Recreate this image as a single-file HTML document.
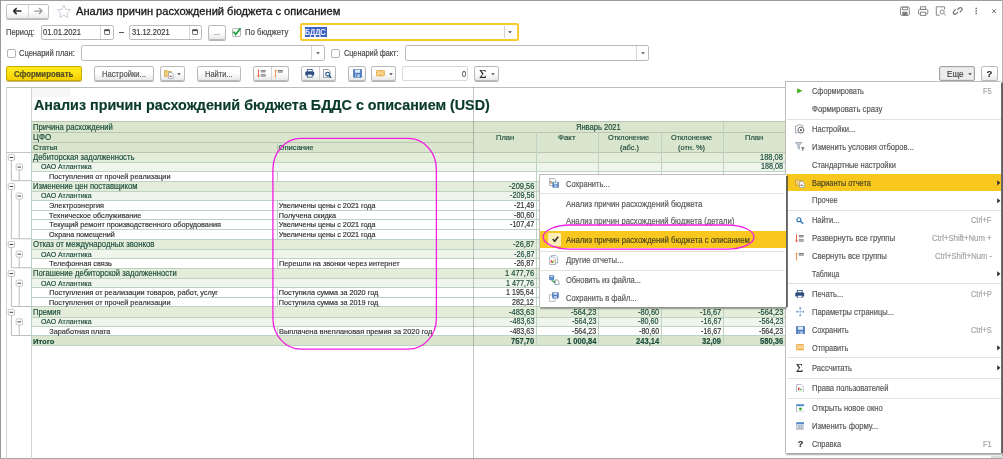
<!DOCTYPE html>
<html lang="ru"><head><meta charset="utf-8"><title>Анализ причин расхождений бюджета с описанием</title>
<style>
html,body{margin:0;padding:0;background:#fff;}
body{width:1003px;height:459px;position:relative;overflow:hidden;font-family:"Liberation Sans",sans-serif;}
#r{position:absolute;left:0;top:0;width:1003px;height:459px;overflow:hidden;background:#fff;filter:blur(0.4px);}
#r div,#r span,#r svg{position:absolute;box-sizing:border-box;}
#r span{white-space:pre;line-height:20px;transform-origin:0 0;-webkit-text-stroke:0.18px;}
</style></head><body><div id="r">
<div style="left:0.00px;top:0.00px;width:1003.00px;height:1.00px;background:#9c9c9c;"></div>
<div style="left:0.00px;top:0.00px;width:1.10px;height:459.00px;background:#9a9a9a;"></div>
<div style="left:0.00px;top:458.00px;width:1003.00px;height:1.00px;background:#a6a6a6;"></div>
<div style="left:1002.00px;top:0.00px;width:1.00px;height:459.00px;background:#b4b4b4;"></div>
<div style="left:6.00px;top:4.40px;width:43.40px;height:14.20px;border:1px solid #c2c2c2;border-radius:2.2px;background:linear-gradient(#fff 45%,#ececec);box-shadow:0 0.9px 0.5px #b8b8b8;"></div>
<div style="left:27.80px;top:5.40px;width:0.80px;height:12.20px;background:#d8d8d8;"></div>
<svg style="left:6.00px;top:4.40px" width="44" height="14" viewBox="0 0 44 14"><path d="M7.4 7.1h8M7.4 7.1l3.3-3M7.4 7.1l3.3 3" stroke="#2a2a2a" stroke-width="1.5" fill="none"/><path d="M28.2 7.1h8M36.2 7.1l-3.3-3M36.2 7.1l-3.3 3" stroke="#9a9a9a" stroke-width="1.3" fill="none"/></svg>
<svg style="left:55.60px;top:4.20px" width="15.6" height="14.6" viewBox="0 0 15 14"><path d="M7.5 1l1.9 4.1 4.4.5-3.3 3 .9 4.4-3.9-2.2-3.9 2.2.9-4.4-3.3-3 4.4-.5z" fill="#fff" stroke="#c2c9d0" stroke-width="0.9"/></svg>
<span style="left:76.00px;top:1px;font-size:11.1px;color:#161616;-webkit-text-stroke:0.3px;">Анализ причин расхождений бюджета с описанием</span>
<svg style="left:899.00px;top:6.00px" width="100" height="11" viewBox="0 0 100 11"><g fill="none" stroke="#7c7c7c" stroke-width="0.9"><rect x="1.5" y="1.1" width="8.8" height="8.2" rx="1"/><rect x="3.4" y="1.1" width="4.9" height="2.6"/><rect x="3.8" y="6.2" width="4.2" height="3.1" fill="#7c7c7c"/><rect x="19.5" y="3.4" width="9.3" height="4.8" rx="1.2"/><rect x="21.6" y="0.8" width="5.1" height="2.6"/><rect x="21.6" y="6.2" width="5.1" height="3.2" fill="#fff"/><path d="M45.5 3.6v-2.8h-8.2v8.4h3.6"/><circle cx="43.2" cy="6" r="2"/><path d="M44.7 7.5l1.9 1.9"/><path d="M59 5.9l-1.9 1.9a1.7 1.7 0 0 1-2.4-2.4l1.9-1.9M58.4 3.9l1.9-1.9a1.7 1.7 0 0 1 2.4 2.4l-1.9 1.9" stroke-width="1.15" stroke="#6e6e6e"/></g><g fill="#666"><rect x="76.5" y="1.7" width="1.4" height="1.5"/><rect x="76.5" y="4.2" width="1.4" height="1.5"/><rect x="76.5" y="6.7" width="1.4" height="1.5"/></g><path d="M93.2 3.3l3.7 3.7M96.9 3.3l-3.7 3.7" stroke="#5a5a5a" stroke-width="0.9" fill="none"/></svg>
<span style="left:6.00px;top:23px;font-size:8.2px;color:#484848;transform:scaleX(0.9151);">Период:</span>
<div style="left:41.00px;top:25.00px;width:72.50px;height:15.00px;border:1px solid #bababa;border-radius:2.2px;background:#fff;"></div>
<div style="left:100.30px;top:25.90px;width:0.80px;height:12.80px;background:#d6d6d6;"></div>
<span style="left:43.20px;top:23px;font-size:8.2px;color:#3c3c3c;transform:scaleX(0.9261);">01.01.2021</span>
<svg style="left:104.10px;top:29.20px" width="6" height="6" viewBox="0 0 6 6"><rect x="0.5" y="0.6" width="5" height="4.8" rx="0.7" fill="#fff" stroke="#4a4a4a" stroke-width="0.8"/><rect x="0.5" y="0.6" width="5" height="1.5" fill="#4a4a4a"/></svg>
<div style="left:119.20px;top:32.00px;width:4.60px;height:1.00px;background:#555;"></div>
<div style="left:129.40px;top:25.00px;width:72.30px;height:15.00px;border:1px solid #bababa;border-radius:2.2px;background:#fff;"></div>
<div style="left:189.40px;top:25.90px;width:0.80px;height:12.80px;background:#d6d6d6;"></div>
<span style="left:132.30px;top:23px;font-size:8.2px;color:#3c3c3c;transform:scaleX(0.9163);">31.12.2021</span>
<svg style="left:192.20px;top:29.20px" width="6" height="6" viewBox="0 0 6 6"><rect x="0.5" y="0.6" width="5" height="4.8" rx="0.7" fill="#fff" stroke="#4a4a4a" stroke-width="0.8"/><rect x="0.5" y="0.6" width="5" height="1.5" fill="#4a4a4a"/></svg>
<div style="left:208.20px;top:24.60px;width:17.80px;height:15.00px;border:1px solid #b8b8b8;border-radius:2.2px;background:linear-gradient(#ffffff 45%,#e9e9e9);box-shadow:0 0.9px 0.4px #b4b4b4;"></div>
<span style="left:213.92px;top:23px;font-size:8.2px;color:#8a8a8a;transform:scaleX(0.9023);">...</span>
<div style="left:232.40px;top:28.20px;width:8.80px;height:8.60px;border:1px solid #b4b4b4;border-radius:2px;background:#fff;"></div>
<svg style="left:232.40px;top:26.60px" width="10" height="9" viewBox="0 0 10 9"><path d="M1.4 4.6l2.3 2.7L8.6 1.2" stroke="#18a040" stroke-width="1.7" fill="none"/></svg>
<span style="left:244.90px;top:23px;font-size:8.2px;color:#484848;transform:scaleX(0.9455);">По бюджету</span>
<div style="left:300.40px;top:23.00px;width:218.80px;height:18.30px;border:2px solid #f8c92e;border-radius:2px;background:#fff;"></div>
<div style="left:304.90px;top:27.40px;width:21.90px;height:9.40px;background:#3b61c4;"></div>
<span style="left:305.40px;top:23px;font-size:8.2px;color:#fff;transform:scaleX(0.9283);">БДДС</span>
<div style="left:503.60px;top:26.30px;width:0.80px;height:11.80px;background:#d2d2d2;"></div>
<svg style="left:508.30px;top:31.30px" width="4" height="2.4" viewBox="0 0 4 2.4"><path d="M0.2 0.2h3.6L2 2.3z" fill="#444"/></svg>
<div style="left:6.50px;top:48.50px;width:9.00px;height:9.00px;border:1px solid #b4b4b4;border-radius:2px;background:#fff;"></div>
<span style="left:19.00px;top:44px;font-size:8.2px;color:#484848;transform:scaleX(0.9184);">Сценарий план:</span>
<div style="left:81.00px;top:45.00px;width:243.50px;height:16.00px;border:1px solid #bababa;border-radius:2.2px;background:#fff;"></div>
<div style="left:311.20px;top:46.00px;width:0.80px;height:14.00px;background:#d6d6d6;"></div>
<svg style="left:315.80px;top:52.30px" width="4" height="2.4" viewBox="0 0 4 2.4"><path d="M0.2 0.2h3.6L2 2.3z" fill="#444"/></svg>
<div style="left:331.10px;top:48.50px;width:9.00px;height:9.00px;border:1px solid #b4b4b4;border-radius:2px;background:#fff;"></div>
<span style="left:344.20px;top:44px;font-size:8.2px;color:#484848;transform:scaleX(0.8907);">Сценарий факт:</span>
<div style="left:404.70px;top:45.00px;width:244.00px;height:16.00px;border:1px solid #bababa;border-radius:2.2px;background:#fff;"></div>
<div style="left:636.40px;top:46.00px;width:0.80px;height:14.00px;background:#d6d6d6;"></div>
<svg style="left:640.50px;top:52.30px" width="4" height="2.4" viewBox="0 0 4 2.4"><path d="M0.2 0.2h3.6L2 2.3z" fill="#444"/></svg>
<div style="left:6.00px;top:65.60px;width:75.70px;height:15.40px;border:1px solid #c9ab00;border-radius:2px;background:linear-gradient(#ffe81a 30%,#f2cf00);box-shadow:0 0.8px 0.5px #b3a04a;"></div>
<span style="left:14.00px;top:65px;font-size:8.2px;color:#4f4c25;font-weight:bold;transform:scaleX(0.9494);">Сформировать</span>
<div style="left:93.70px;top:66.00px;width:60.50px;height:15.00px;border:1px solid #b8b8b8;border-radius:2.2px;background:linear-gradient(#ffffff 45%,#e9e9e9);box-shadow:0 0.9px 0.4px #b4b4b4;"></div>
<span style="left:101.90px;top:65px;font-size:8.2px;color:#505050;transform:scaleX(0.9355);">Настройки...</span>
<div style="left:160.00px;top:66.00px;width:25.00px;height:15.00px;border:1px solid #b8b8b8;border-radius:2.2px;background:linear-gradient(#ffffff 45%,#e9e9e9);box-shadow:0 0.9px 0.4px #b4b4b4;"></div>
<svg style="left:163.60px;top:68.60px" width="10" height="10" viewBox="0 0 10 10"><path d="M0.5 1.6h2.6l0.8 0.9h3.4v4.8h-6.8z" fill="#f3cf7a" stroke="#c79a2f" stroke-width="0.7"/><path d="M4.6 3.6h3.2l1.4 1.4v4.4h-4.6z" fill="#fff" stroke="#8a98aa" stroke-width="0.7"/><rect x="5.8" y="6.4" width="1" height="1.6" fill="#d33"/><rect x="6.9" y="7" width="1" height="1" fill="#3a3"/></svg>
<svg style="left:177.20px;top:73.00px" width="4" height="2.4" viewBox="0 0 4 2.4"><path d="M0.2 0.2h3.6L2 2.3z" fill="#444"/></svg>
<div style="left:196.60px;top:66.00px;width:44.60px;height:15.00px;border:1px solid #b8b8b8;border-radius:2.2px;background:linear-gradient(#ffffff 45%,#e9e9e9);box-shadow:0 0.9px 0.4px #b4b4b4;"></div>
<span style="left:205.00px;top:65px;font-size:8.2px;color:#505050;transform:scaleX(0.9130);">Найти...</span>
<div style="left:253.20px;top:66.00px;width:35.60px;height:15.00px;border:1px solid #b8b8b8;border-radius:2.2px;background:linear-gradient(#ffffff 45%,#e9e9e9);box-shadow:0 0.9px 0.4px #b4b4b4;"></div>
<div style="left:271.10px;top:67.00px;width:0.80px;height:13.00px;background:#d2d2d2;"></div>
<svg style="left:256.70px;top:69.00px" width="9" height="9" viewBox="0 0 9 9"><path d="M1.5 0.3v7.6" stroke="#e8502a" stroke-width="0.9"/><path d="M0.2 6.6h2.6L1.5 8.6z" fill="#e8502a"/><rect x="3.8" y="1" width="4.8" height="2.4" fill="#7d7d7d"/><rect x="3.8" y="5.2" width="4.8" height="2.4" fill="#7d7d7d"/><rect x="3.8" y="1.9" width="4.8" height="0.6" fill="#cfcfcf"/><rect x="3.8" y="6.1" width="4.8" height="0.6" fill="#cfcfcf"/></svg>
<svg style="left:274.00px;top:69.00px" width="9" height="9" viewBox="0 0 9 9"><path d="M1.5 1v7.6" stroke="#f08a3c" stroke-width="0.9"/><path d="M0.2 2.2h2.6L1.5 0.2z" fill="#f08a3c"/><rect x="3.8" y="1" width="5" height="2.6" fill="#7d7d7d"/><rect x="3.8" y="2" width="5" height="0.6" fill="#cfcfcf"/></svg>
<div style="left:301.00px;top:66.00px;width:35.20px;height:15.00px;border:1px solid #b8b8b8;border-radius:2.2px;background:linear-gradient(#ffffff 45%,#e9e9e9);box-shadow:0 0.9px 0.4px #b4b4b4;"></div>
<div style="left:318.50px;top:67.00px;width:0.80px;height:13.00px;background:#d2d2d2;"></div>
<svg style="left:305.10px;top:69.20px" width="9.5" height="8.5" viewBox="0 0 9.5 8.5"><rect x="2.3" y="0.4" width="4.9" height="2.6" fill="#fff" stroke="#2c4d7c" stroke-width="0.8"/><rect x="0.3" y="2.6" width="8.9" height="4" rx="1.2" fill="#2c4d7c"/><rect x="2.3" y="5.2" width="4.9" height="2.9" fill="#fff" stroke="#2c4d7c" stroke-width="0.8"/></svg>
<svg style="left:322.80px;top:68.80px" width="9" height="9.5" viewBox="0 0 9 9.5"><path d="M0.5 0.5h4.8l1.8 1.8v6.4h-6.6z" fill="#fff" stroke="#7d8a98" stroke-width="0.8"/><circle cx="4.6" cy="5.2" r="1.9" fill="#fff" stroke="#1f4f86" stroke-width="1.1"/><path d="M6 6.7l2.2 2.2" stroke="#1f4f86" stroke-width="1.3"/></svg>
<div style="left:348.20px;top:66.00px;width:18.00px;height:15.00px;border:1px solid #b8b8b8;border-radius:2.2px;background:linear-gradient(#ffffff 45%,#e9e9e9);box-shadow:0 0.9px 0.4px #b4b4b4;"></div>
<svg style="left:353.00px;top:69.00px" width="9" height="8.7" viewBox="0 0 9 8.7"><rect x="0.3" y="0.3" width="8.4" height="8.1" rx="0.8" fill="#4d7cc0" stroke="#3a64a2" stroke-width="0.6"/><rect x="1.9" y="0.6" width="5.2" height="3.2" fill="#dfe9f6"/><rect x="2.2" y="5.4" width="4.6" height="3" fill="#b9cce8"/><rect x="3" y="6" width="1.3" height="1.8" fill="#4d7cc0"/></svg>
<div style="left:371.20px;top:66.00px;width:24.80px;height:15.00px;border:1px solid #b8b8b8;border-radius:2.2px;background:linear-gradient(#ffffff 45%,#e9e9e9);box-shadow:0 0.9px 0.4px #b4b4b4;"></div>
<svg style="left:376.00px;top:70.40px" width="8.7" height="6.2" viewBox="0 0 8.7 6.2"><rect x="0.3" y="0.3" width="8.1" height="5.6" rx="0.8" fill="#f6c56a" stroke="#e0952a" stroke-width="0.7"/><path d="M0.8 0.9l3.55 2.7 3.55-2.7M0.8 5.4l2.6-2.2M7.9 5.4l-2.6-2.2" fill="none" stroke="#fff3d6" stroke-width="0.7"/></svg>
<svg style="left:388.60px;top:73.00px" width="4" height="2.4" viewBox="0 0 4 2.4"><path d="M0.2 0.2h3.6L2 2.3z" fill="#444"/></svg>
<div style="left:401.80px;top:66.00px;width:66.20px;height:14.80px;border:1px solid #d9d9d9;border-radius:2px;background:#fff;"></div>
<span style="left:462.18px;top:65px;font-size:8.2px;color:#4a4a4a;transform:scaleX(0.9025);">0</span>
<div style="left:474.30px;top:66.00px;width:24.60px;height:15.00px;border:1px solid #b8b8b8;border-radius:2.2px;background:linear-gradient(#ffffff 45%,#e9e9e9);box-shadow:0 0.9px 0.4px #b4b4b4;"></div>
<span style="left:479.30px;top:64px;font-size:12.5px;color:#2e2e2e;font-family:'Liberation Serif',serif;">Σ</span>
<svg style="left:491.20px;top:73.00px" width="4" height="2.4" viewBox="0 0 4 2.4"><path d="M0.2 0.2h3.6L2 2.3z" fill="#444"/></svg>
<div style="left:939.30px;top:66.00px;width:35.50px;height:15.20px;border:1.3px solid #a4a4a4;border-radius:2px;background:#ededed;box-shadow:inset 0 0 0 0.8px #dcdcdc;"></div>
<span style="left:947.20px;top:65px;font-size:8.2px;color:#444;transform:scaleX(0.9950);">Еще</span>
<svg style="left:967.60px;top:73.40px" width="4" height="2.4" viewBox="0 0 4 2.4"><path d="M0.2 0.2h3.6L2 2.3z" fill="#444"/></svg>
<div style="left:980.70px;top:66.00px;width:17.60px;height:15.20px;border:1px solid #b8b8b8;border-radius:2.2px;background:linear-gradient(#ffffff 45%,#e9e9e9);box-shadow:0 0.9px 0.4px #b4b4b4;"></div>
<span style="left:986.57px;top:64px;font-size:9.6px;color:#2e2e2e;font-weight:bold;">?</span>
<div style="left:5.60px;top:86.70px;width:998.00px;height:1.00px;background:#bcbcbc;"></div>
<div style="left:5.50px;top:86.70px;width:1.10px;height:372.00px;background:#d2d2d2;"></div>
<div style="left:30.60px;top:86.70px;width:1.10px;height:372.00px;background:#d2d2d2;"></div>
<div style="left:32.20px;top:88.00px;width:38.00px;height:8.60px;background:#f7f7f7;"></div>
<div style="left:6.00px;top:151.70px;width:26.00px;height:1.00px;background:#c4c4c4;"></div>
<span style="left:34.40px;top:96px;font-size:13.8px;color:#0a3a2c;font-weight:bold;transform:scaleX(1.0386);">Анализ причин расхождений бюджета БДДС с описанием (USD)</span>
<div style="left:31.30px;top:121.78px;width:754.30px;height:30.17px;background:#d9e5cd;"></div>
<div style="left:31.30px;top:151.95px;width:754.30px;height:10.25px;background:#e3edda;"></div>
<div style="left:31.30px;top:162.20px;width:754.30px;height:9.11px;background:#f0f5ec;"></div>
<div style="left:31.30px;top:180.99px;width:754.30px;height:10.25px;background:#e3edda;"></div>
<div style="left:31.30px;top:191.23px;width:754.30px;height:9.11px;background:#f0f5ec;"></div>
<div style="left:31.30px;top:239.06px;width:754.30px;height:10.25px;background:#e3edda;"></div>
<div style="left:31.30px;top:249.30px;width:754.30px;height:9.11px;background:#f0f5ec;"></div>
<div style="left:31.30px;top:268.09px;width:754.30px;height:10.25px;background:#e3edda;"></div>
<div style="left:31.30px;top:278.34px;width:754.30px;height:9.11px;background:#f0f5ec;"></div>
<div style="left:31.30px;top:306.80px;width:754.30px;height:10.25px;background:#e3edda;"></div>
<div style="left:31.30px;top:317.05px;width:754.30px;height:9.11px;background:#f0f5ec;"></div>
<div style="left:31.30px;top:335.84px;width:754.30px;height:9.68px;background:#d9e5cd;"></div>
<div style="left:31.30px;top:121.33px;width:754.30px;height:0.90px;background:#bac5b2;"></div>
<div style="left:31.30px;top:131.58px;width:442.40px;height:0.90px;background:#bac5b2;"></div>
<div style="left:473.70px;top:131.58px;width:311.90px;height:0.90px;background:#bac5b2;"></div>
<div style="left:31.30px;top:141.82px;width:442.40px;height:0.90px;background:#bac5b2;"></div>
<div style="left:31.30px;top:151.50px;width:754.30px;height:0.90px;background:#bac5b2;"></div>
<div style="left:31.30px;top:161.75px;width:754.30px;height:0.90px;background:#bdd2c2;"></div>
<div style="left:31.30px;top:170.86px;width:754.30px;height:0.90px;background:#bdd2c2;"></div>
<div style="left:31.30px;top:180.54px;width:754.30px;height:0.90px;background:#bdd2c2;"></div>
<div style="left:31.30px;top:190.78px;width:754.30px;height:0.90px;background:#bdd2c2;"></div>
<div style="left:31.30px;top:199.89px;width:754.30px;height:0.90px;background:#bdd2c2;"></div>
<div style="left:31.30px;top:209.57px;width:754.30px;height:0.90px;background:#bdd2c2;"></div>
<div style="left:31.30px;top:219.25px;width:754.30px;height:0.90px;background:#bdd2c2;"></div>
<div style="left:31.30px;top:228.93px;width:754.30px;height:0.90px;background:#bdd2c2;"></div>
<div style="left:31.30px;top:238.61px;width:754.30px;height:0.90px;background:#bdd2c2;"></div>
<div style="left:31.30px;top:248.85px;width:754.30px;height:0.90px;background:#bdd2c2;"></div>
<div style="left:31.30px;top:257.96px;width:754.30px;height:0.90px;background:#bdd2c2;"></div>
<div style="left:31.30px;top:267.64px;width:754.30px;height:0.90px;background:#bdd2c2;"></div>
<div style="left:31.30px;top:277.89px;width:754.30px;height:0.90px;background:#bdd2c2;"></div>
<div style="left:31.30px;top:287.00px;width:754.30px;height:0.90px;background:#bdd2c2;"></div>
<div style="left:31.30px;top:296.67px;width:754.30px;height:0.90px;background:#bdd2c2;"></div>
<div style="left:31.30px;top:306.35px;width:754.30px;height:0.90px;background:#bdd2c2;"></div>
<div style="left:31.30px;top:316.60px;width:754.30px;height:0.90px;background:#bdd2c2;"></div>
<div style="left:31.30px;top:325.71px;width:754.30px;height:0.90px;background:#bdd2c2;"></div>
<div style="left:31.30px;top:335.39px;width:754.30px;height:0.90px;background:#bdd2c2;"></div>
<div style="left:31.30px;top:345.06px;width:754.30px;height:0.90px;background:#bdd2c2;"></div>
<div style="left:535.85px;top:132.03px;width:0.90px;height:213.49px;background:#bdd2c2;"></div>
<div style="left:598.25px;top:132.03px;width:0.90px;height:213.49px;background:#bdd2c2;"></div>
<div style="left:660.55px;top:132.03px;width:0.90px;height:213.49px;background:#bdd2c2;"></div>
<div style="left:722.85px;top:121.78px;width:0.90px;height:223.73px;background:#bdd2c2;"></div>
<div style="left:276.55px;top:142.27px;width:0.90px;height:9.68px;background:#bac5b2;"></div>
<div style="left:276.55px;top:171.31px;width:0.90px;height:9.68px;background:#bdd2c2;"></div>
<div style="left:276.55px;top:200.34px;width:0.90px;height:9.68px;background:#bdd2c2;"></div>
<div style="left:276.55px;top:210.02px;width:0.90px;height:9.68px;background:#bdd2c2;"></div>
<div style="left:276.55px;top:219.70px;width:0.90px;height:9.68px;background:#bdd2c2;"></div>
<div style="left:276.55px;top:229.38px;width:0.90px;height:9.68px;background:#bdd2c2;"></div>
<div style="left:276.55px;top:258.41px;width:0.90px;height:9.68px;background:#bdd2c2;"></div>
<div style="left:276.55px;top:287.45px;width:0.90px;height:9.68px;background:#bdd2c2;"></div>
<div style="left:276.55px;top:297.12px;width:0.90px;height:9.68px;background:#bdd2c2;"></div>
<div style="left:276.55px;top:326.16px;width:0.90px;height:9.68px;background:#bdd2c2;"></div>
<div style="left:30.85px;top:121.78px;width:0.90px;height:223.73px;background:#bdd2c2;"></div>
<span style="left:33.00px;top:118px;font-size:8.2px;color:#1d4d3d;transform:scaleX(0.9361);">Причина расхождений</span>
<span style="left:33.00px;top:128px;font-size:8.2px;color:#1d4d3d;transform:scaleX(0.9745);">ЦФО</span>
<span style="left:33.00px;top:138px;font-size:7.6px;color:#1d4d3d;">Статья</span>
<span style="left:278.60px;top:138px;font-size:7.6px;color:#1d4d3d;">Описание</span>
<span style="left:576.00px;top:118px;font-size:8.2px;color:#1d4d3d;transform:scaleX(0.9214);">Январь 2021</span>
<span style="left:496.20px;top:128px;font-size:7.8px;color:#1d4d3d;transform:scaleX(0.9679);">План</span>
<span style="left:558.45px;top:128px;font-size:7.8px;color:#1d4d3d;transform:scaleX(1.0092);">Факт</span>
<span style="left:608.40px;top:128px;font-size:7.8px;color:#1d4d3d;transform:scaleX(0.9414);">Отклонение</span>
<span style="left:619.52px;top:138px;font-size:7.8px;color:#1d4d3d;transform:scaleX(0.9486);">(абс.)</span>
<span style="left:670.70px;top:128px;font-size:7.8px;color:#1d4d3d;transform:scaleX(0.9414);">Отклонение</span>
<span style="left:677.78px;top:138px;font-size:7.8px;color:#1d4d3d;transform:scaleX(0.9486);">(отн. %)</span>
<span style="left:745.40px;top:128px;font-size:7.8px;color:#1d4d3d;transform:scaleX(0.9679);">План</span>
<span style="left:33.00px;top:148px;font-size:8.2px;color:#1d4d3d;transform:scaleX(0.9288);">Дебиторская задолженность</span>
<span style="left:760.46px;top:148px;font-size:8.2px;color:#1d4d3d;transform:scaleX(0.9148);">188,08</span>
<span style="left:41.30px;top:157px;font-size:7.0px;color:#1d4d3d;transform:scaleX(0.9953);">ОАО Атлантика</span>
<span style="left:761.38px;top:157px;font-size:8.2px;color:#1d4d3d;transform:scaleX(0.8781);">188,08</span>
<span style="left:49.30px;top:167px;font-size:7.25px;color:#333333;transform:scaleX(1.0043);">Поступления от прочей реализации</span>
<span style="left:33.00px;top:177px;font-size:8.2px;color:#1d4d3d;transform:scaleX(0.9371);">Изменение цен поставщиком</span>
<span style="left:508.66px;top:177px;font-size:8.2px;color:#1d4d3d;transform:scaleX(0.9148);">-209,56</span>
<span style="left:41.30px;top:186px;font-size:7.0px;color:#1d4d3d;transform:scaleX(0.9953);">ОАО Атлантика</span>
<span style="left:509.68px;top:186px;font-size:8.2px;color:#1d4d3d;transform:scaleX(0.8781);">-209,56</span>
<span style="left:49.30px;top:196px;font-size:7.25px;color:#333333;transform:scaleX(1.0155);">Электроэнергия</span>
<span style="left:278.80px;top:196px;font-size:7.25px;color:#333333;">Увеличены цены с 2021 года</span>
<span style="left:513.83px;top:196px;font-size:8.2px;color:#333333;transform:scaleX(0.8721);">-21,49</span>
<span style="left:49.30px;top:206px;font-size:7.25px;color:#333333;transform:scaleX(0.9936);">Техническое обслуживание</span>
<span style="left:278.80px;top:206px;font-size:7.25px;color:#333333;">Получена скидка</span>
<span style="left:513.83px;top:206px;font-size:8.2px;color:#333333;transform:scaleX(0.8721);">-80,60</span>
<span style="left:49.30px;top:215px;font-size:7.25px;color:#333333;">Текущий ремонт производственного оборудования</span>
<span style="left:278.80px;top:215px;font-size:7.25px;color:#333333;">Увеличены цены с 2021 года</span>
<span style="left:509.85px;top:215px;font-size:8.2px;color:#333333;transform:scaleX(0.8721);">-107,47</span>
<span style="left:49.30px;top:225px;font-size:7.25px;color:#333333;transform:scaleX(0.9941);">Охрана помещений</span>
<span style="left:278.80px;top:225px;font-size:7.25px;color:#333333;">Увеличены цены с 2021 года</span>
<span style="left:33.00px;top:235px;font-size:8.2px;color:#1d4d3d;transform:scaleX(0.9447);">Отказ от международных звонков</span>
<span style="left:512.83px;top:235px;font-size:8.2px;color:#1d4d3d;transform:scaleX(0.9148);">-26,87</span>
<span style="left:41.30px;top:245px;font-size:7.0px;color:#1d4d3d;transform:scaleX(0.9953);">ОАО Атлантика</span>
<span style="left:513.69px;top:245px;font-size:8.2px;color:#1d4d3d;transform:scaleX(0.8781);">-26,87</span>
<span style="left:49.30px;top:254px;font-size:7.25px;color:#333333;">Телефонная связь</span>
<span style="left:278.80px;top:254px;font-size:7.25px;color:#333333;transform:scaleX(1.0104);">Перешли на звонки через интернет</span>
<span style="left:513.83px;top:254px;font-size:8.2px;color:#333333;transform:scaleX(0.8721);">-26,87</span>
<span style="left:33.00px;top:264px;font-size:8.2px;color:#1d4d3d;transform:scaleX(0.9367);">Погашение дебиторской задолженности</span>
<span style="left:504.91px;top:264px;font-size:8.2px;color:#1d4d3d;transform:scaleX(0.9147);">1 477,76</span>
<span style="left:41.30px;top:274px;font-size:7.0px;color:#1d4d3d;transform:scaleX(0.9953);">ОАО Атлантика</span>
<span style="left:506.08px;top:274px;font-size:8.2px;color:#1d4d3d;transform:scaleX(0.8781);">1 477,76</span>
<span style="left:49.30px;top:283px;font-size:7.25px;color:#333333;">Поступления от реализации товаров, работ, услуг</span>
<span style="left:278.80px;top:283px;font-size:7.25px;color:#333333;">Поступила сумма за 2020 год</span>
<span style="left:506.27px;top:283px;font-size:8.2px;color:#333333;transform:scaleX(0.8721);">1 195,64</span>
<span style="left:49.30px;top:293px;font-size:7.25px;color:#333333;transform:scaleX(1.0043);">Поступления от прочей реализации</span>
<span style="left:278.80px;top:293px;font-size:7.25px;color:#333333;">Поступила сумма за 2019 год</span>
<span style="left:512.23px;top:293px;font-size:8.2px;color:#333333;transform:scaleX(0.8721);">282,12</span>
<span style="left:33.00px;top:303px;font-size:8.2px;color:#1d4d3d;transform:scaleX(0.9367);">Премия</span>
<span style="left:508.66px;top:303px;font-size:8.2px;color:#1d4d3d;transform:scaleX(0.9148);">-483,63</span>
<span style="left:571.06px;top:303px;font-size:8.2px;color:#1d4d3d;transform:scaleX(0.9148);">-564,23</span>
<span style="left:637.53px;top:303px;font-size:8.2px;color:#1d4d3d;transform:scaleX(0.9148);">-80,60</span>
<span style="left:699.83px;top:303px;font-size:8.2px;color:#1d4d3d;transform:scaleX(0.9148);">-16,67</span>
<span style="left:757.96px;top:303px;font-size:8.2px;color:#1d4d3d;transform:scaleX(0.9148);">-564,23</span>
<span style="left:41.30px;top:312px;font-size:7.0px;color:#1d4d3d;transform:scaleX(0.9953);">ОАО Атлантика</span>
<span style="left:509.68px;top:312px;font-size:8.2px;color:#1d4d3d;transform:scaleX(0.8781);">-483,63</span>
<span style="left:572.08px;top:312px;font-size:8.2px;color:#1d4d3d;transform:scaleX(0.8781);">-564,23</span>
<span style="left:638.39px;top:312px;font-size:8.2px;color:#1d4d3d;transform:scaleX(0.8781);">-80,60</span>
<span style="left:700.69px;top:312px;font-size:8.2px;color:#1d4d3d;transform:scaleX(0.8781);">-16,67</span>
<span style="left:758.98px;top:312px;font-size:8.2px;color:#1d4d3d;transform:scaleX(0.8781);">-564,23</span>
<span style="left:49.30px;top:322px;font-size:7.25px;color:#333333;">Заработная плата</span>
<span style="left:278.80px;top:322px;font-size:7.25px;color:#333333;transform:scaleX(1.0162);">Выплачена внеплановая премия за 2020 год</span>
<span style="left:509.85px;top:322px;font-size:8.2px;color:#333333;transform:scaleX(0.8721);">-483,63</span>
<span style="left:572.25px;top:322px;font-size:8.2px;color:#333333;transform:scaleX(0.8721);">-564,23</span>
<span style="left:638.53px;top:322px;font-size:8.2px;color:#333333;transform:scaleX(0.8721);">-80,60</span>
<span style="left:700.83px;top:322px;font-size:8.2px;color:#333333;transform:scaleX(0.8721);">-16,67</span>
<span style="left:759.15px;top:322px;font-size:8.2px;color:#333333;transform:scaleX(0.8721);">-564,23</span>
<span style="left:33.00px;top:332px;font-size:7.6px;color:#1d4d3d;font-weight:bold;">Итого</span>
<span style="left:510.86px;top:332px;font-size:8.2px;color:#1d4d3d;font-weight:bold;transform:scaleX(0.9269);">757,70</span>
<span style="left:566.92px;top:332px;font-size:8.2px;color:#1d4d3d;font-weight:bold;transform:scaleX(0.9269);">1 000,84</span>
<span style="left:635.56px;top:332px;font-size:8.2px;color:#1d4d3d;font-weight:bold;transform:scaleX(0.9269);">243,14</span>
<span style="left:702.08px;top:332px;font-size:8.2px;color:#1d4d3d;font-weight:bold;transform:scaleX(0.9269);">32,09</span>
<span style="left:760.16px;top:332px;font-size:8.2px;color:#1d4d3d;font-weight:bold;transform:scaleX(0.9269);">580,36</span>
<div style="left:473.30px;top:87.00px;width:1.00px;height:372.00px;background:rgba(120,120,120,0.42);"></div>
<svg style="left:0.00px;top:0.00px" width="40" height="459" viewBox="0 0 40 459"><path d="M11.4 160.48V180.69H31.5M19.2 170.10V180.69" fill="none" stroke="#b4b4b4" stroke-width="0.9"/><rect x="8.20" y="154.38" width="6.4" height="6.1" rx="1.5" fill="#fff" stroke="#bdbdbd" stroke-width="0.9"/><path d="M9.65 157.43h3.5" stroke="#3c3c3c" stroke-width="1"/><rect x="16.10" y="164.00" width="6.4" height="6.1" rx="1.5" fill="#fff" stroke="#bdbdbd" stroke-width="0.9"/><path d="M17.55 167.05h3.5" stroke="#3c3c3c" stroke-width="1"/><path d="M11.4 189.51V238.76H31.5M19.2 199.14V238.76" fill="none" stroke="#b4b4b4" stroke-width="0.9"/><rect x="8.20" y="183.41" width="6.4" height="6.1" rx="1.5" fill="#fff" stroke="#bdbdbd" stroke-width="0.9"/><path d="M9.65 186.46h3.5" stroke="#3c3c3c" stroke-width="1"/><rect x="16.10" y="193.04" width="6.4" height="6.1" rx="1.5" fill="#fff" stroke="#bdbdbd" stroke-width="0.9"/><path d="M17.55 196.09h3.5" stroke="#3c3c3c" stroke-width="1"/><path d="M11.4 247.58V267.79H31.5M19.2 257.21V267.79" fill="none" stroke="#b4b4b4" stroke-width="0.9"/><rect x="8.20" y="241.48" width="6.4" height="6.1" rx="1.5" fill="#fff" stroke="#bdbdbd" stroke-width="0.9"/><path d="M9.65 244.53h3.5" stroke="#3c3c3c" stroke-width="1"/><rect x="16.10" y="251.11" width="6.4" height="6.1" rx="1.5" fill="#fff" stroke="#bdbdbd" stroke-width="0.9"/><path d="M17.55 254.16h3.5" stroke="#3c3c3c" stroke-width="1"/><path d="M11.4 276.61V306.50H31.5M19.2 286.24V306.50" fill="none" stroke="#b4b4b4" stroke-width="0.9"/><rect x="8.20" y="270.51" width="6.4" height="6.1" rx="1.5" fill="#fff" stroke="#bdbdbd" stroke-width="0.9"/><path d="M9.65 273.56h3.5" stroke="#3c3c3c" stroke-width="1"/><rect x="16.10" y="280.14" width="6.4" height="6.1" rx="1.5" fill="#fff" stroke="#bdbdbd" stroke-width="0.9"/><path d="M17.55 283.19h3.5" stroke="#3c3c3c" stroke-width="1"/><path d="M11.4 315.33V335.54H31.5M19.2 324.95V335.54" fill="none" stroke="#b4b4b4" stroke-width="0.9"/><rect x="8.20" y="309.23" width="6.4" height="6.1" rx="1.5" fill="#fff" stroke="#bdbdbd" stroke-width="0.9"/><path d="M9.65 312.28h3.5" stroke="#3c3c3c" stroke-width="1"/><rect x="16.10" y="318.85" width="6.4" height="6.1" rx="1.5" fill="#fff" stroke="#bdbdbd" stroke-width="0.9"/><path d="M17.55 321.90h3.5" stroke="#3c3c3c" stroke-width="1"/></svg>
<svg style="left:0.00px;top:0.00px" width="1003" height="459" viewBox="0 0 1003 459"><rect x="272.9" y="138.4" width="163.5" height="210.8" rx="28" ry="31" fill="none" stroke="#f51de3" stroke-width="1.3"/></svg>
<div style="left:785.40px;top:81.00px;width:215.80px;height:372.30px;background:#fff;border:0.9px solid #bdbdbd;border-right:none;border-bottom:none;box-shadow:1.8px 0.2px 0.8px rgba(40,40,40,0.55),0.8px 1.9px 1.3px rgba(0,0,0,0.34);"></div>
<div style="left:786.80px;top:174.30px;width:214.40px;height:16.80px;background:#f9c81e;"></div>
<span style="left:812.20px;top:82px;font-size:8.2px;color:#585858;transform:scaleX(0.8998);">Сформировать</span>
<span style="left:983.17px;top:82px;font-size:8.2px;color:#a4a4a4;transform:scaleX(0.9024);">F5</span>
<span style="left:812.20px;top:100px;font-size:8.2px;color:#585858;transform:scaleX(0.9446);">Формировать сразу</span>
<span style="left:812.20px;top:120px;font-size:8.2px;color:#585858;transform:scaleX(0.9206);">Настройки...</span>
<span style="left:812.20px;top:138px;font-size:8.2px;color:#585858;transform:scaleX(0.9259);">Изменить условия отборов...</span>
<span style="left:812.20px;top:156px;font-size:8.2px;color:#585858;transform:scaleX(0.9109);">Стандартные настройки</span>
<span style="left:812.20px;top:174px;font-size:8.2px;color:#4a4422;transform:scaleX(0.9063);">Варианты отчета</span>
<svg style="left:997.20px;top:180.10px" width="3.6" height="5.6" viewBox="0 0 3.6 5.6"><path d="M0.2 0.2L3.4 2.8L0.2 5.4z" fill="#2e2e2e"/></svg>
<span style="left:812.20px;top:191px;font-size:8.2px;color:#585858;transform:scaleX(0.9141);">Прочее</span>
<svg style="left:997.20px;top:197.70px" width="3.6" height="5.6" viewBox="0 0 3.6 5.6"><path d="M0.2 0.2L3.4 2.8L0.2 5.4z" fill="#2e2e2e"/></svg>
<span style="left:812.20px;top:211px;font-size:8.2px;color:#585858;transform:scaleX(0.9031);">Найти...</span>
<span style="left:971.45px;top:211px;font-size:8.2px;color:#a4a4a4;transform:scaleX(0.9024);">Ctrl+F</span>
<span style="left:812.20px;top:229px;font-size:8.2px;color:#585858;transform:scaleX(0.9545);">Развернуть все группы</span>
<span style="left:932.20px;top:229px;font-size:8.2px;color:#a4a4a4;transform:scaleX(0.9444);">Ctrl+Shift+Num +</span>
<span style="left:812.20px;top:247px;font-size:8.2px;color:#585858;transform:scaleX(0.9402);">Свернуть все группы</span>
<span style="left:934.70px;top:247px;font-size:8.2px;color:#a4a4a4;transform:scaleX(0.9353);">Ctrl+Shift+Num -</span>
<span style="left:812.20px;top:265px;font-size:8.2px;color:#585858;transform:scaleX(0.8492);">Таблица</span>
<svg style="left:997.20px;top:271.40px" width="3.6" height="5.6" viewBox="0 0 3.6 5.6"><path d="M0.2 0.2L3.4 2.8L0.2 5.4z" fill="#2e2e2e"/></svg>
<span style="left:812.20px;top:285px;font-size:8.2px;color:#585858;transform:scaleX(0.9290);">Печать...</span>
<span style="left:971.04px;top:285px;font-size:8.2px;color:#a4a4a4;transform:scaleX(0.9025);">Ctrl+P</span>
<span style="left:812.20px;top:303px;font-size:8.2px;color:#585858;transform:scaleX(0.9163);">Параметры страницы...</span>
<span style="left:812.20px;top:321px;font-size:8.2px;color:#585858;transform:scaleX(0.8983);">Сохранить</span>
<span style="left:971.04px;top:321px;font-size:8.2px;color:#a4a4a4;transform:scaleX(0.9025);">Ctrl+S</span>
<span style="left:812.20px;top:339px;font-size:8.2px;color:#585858;transform:scaleX(0.8929);">Отправить</span>
<svg style="left:997.20px;top:345.20px" width="3.6" height="5.6" viewBox="0 0 3.6 5.6"><path d="M0.2 0.2L3.4 2.8L0.2 5.4z" fill="#2e2e2e"/></svg>
<span style="left:812.20px;top:359px;font-size:8.2px;color:#585858;transform:scaleX(0.9349);">Рассчитать</span>
<svg style="left:997.20px;top:365.30px" width="3.6" height="5.6" viewBox="0 0 3.6 5.6"><path d="M0.2 0.2L3.4 2.8L0.2 5.4z" fill="#2e2e2e"/></svg>
<span style="left:812.20px;top:379px;font-size:8.2px;color:#585858;transform:scaleX(0.9259);">Права пользователей</span>
<span style="left:812.20px;top:399px;font-size:8.2px;color:#585858;transform:scaleX(0.9260);">Открыть новое окно</span>
<span style="left:812.20px;top:417px;font-size:8.2px;color:#585858;transform:scaleX(0.9342);">Изменить форму...</span>
<span style="left:812.20px;top:435px;font-size:8.2px;color:#585858;transform:scaleX(0.9048);">Справка</span>
<span style="left:983.17px;top:435px;font-size:8.2px;color:#a4a4a4;transform:scaleX(0.9024);">F1</span>
<div style="left:786.60px;top:118.80px;width:214.60px;height:1.00px;background:#e5e2da;"></div>
<div style="left:786.60px;top:209.80px;width:214.60px;height:1.00px;background:#e5e2da;"></div>
<div style="left:786.60px;top:283.30px;width:214.60px;height:1.00px;background:#e5e2da;"></div>
<div style="left:786.60px;top:357.10px;width:214.60px;height:1.00px;background:#e5e2da;"></div>
<div style="left:786.60px;top:377.60px;width:214.60px;height:1.00px;background:#e5e2da;"></div>
<div style="left:786.60px;top:397.70px;width:214.60px;height:1.00px;background:#e5e2da;"></div>
<svg style="left:797.30px;top:88.40px" width="5.6" height="5.6" viewBox="0 0 5.6 5.6"><path d="M0.2 0.2L5.4 2.8L0.2 5.4z" fill="#3db01c"/></svg>
<svg style="left:795.20px;top:124.20px" width="10" height="10" viewBox="0 0 10 10"><path d="M0.5 2v6.8h2.4M0.5 2h2l0.8-1.2h3l0.8 1.2h1.6" fill="none" stroke="#8b97a8" stroke-width="0.8"/><circle cx="5.9" cy="6.1" r="3" fill="#fff" stroke="#5a5a5a" stroke-width="0.9"/><circle cx="5.9" cy="6.1" r="1.1" fill="#5a5a5a"/></svg>
<svg style="left:795.40px;top:142.40px" width="9.6" height="9" viewBox="0 0 9.6 9"><path d="M0.3 0.5h6.6L4.3 3.6v3.6l-1.4-1V3.6z" fill="#c5ccd6" stroke="#8d99a8" stroke-width="0.7"/><path d="M6.4 5.8h2.8M7.8 5.8v2.9" stroke="#3a3a3a" stroke-width="0.9"/></svg>
<svg style="left:795.20px;top:177.50px" width="10" height="10" viewBox="0 0 10 10"><path d="M0.5 1.6h2.6l0.8 0.9h3.4v4.8h-6.8z" fill="#f3cf7a" stroke="#c79a2f" stroke-width="0.7"/><path d="M4.6 3.6h3.2l1.4 1.4v4.4h-4.6z" fill="#fff" stroke="#8a98aa" stroke-width="0.7"/><rect x="5.8" y="6.4" width="1" height="1.6" fill="#d33"/><rect x="6.9" y="7" width="1" height="1" fill="#3a3"/></svg>
<svg style="left:796.00px;top:217.40px" width="8" height="7" viewBox="0 0 8 7"><circle cx="2.9" cy="2.7" r="2" fill="#fff" stroke="#2772b3" stroke-width="1.1"/><path d="M4.4 4.2l2.8 2.4" stroke="#2772b3" stroke-width="1.4"/></svg>
<svg style="left:795.20px;top:233.80px" width="9" height="9" viewBox="0 0 9 9"><path d="M1.5 0.3v7.6" stroke="#e8502a" stroke-width="0.9"/><path d="M0.2 6.6h2.6L1.5 8.6z" fill="#e8502a"/><rect x="3.8" y="1" width="4.8" height="2.4" fill="#7d7d7d"/><rect x="3.8" y="5.2" width="4.8" height="2.4" fill="#7d7d7d"/><rect x="3.8" y="1.9" width="4.8" height="0.6" fill="#cfcfcf"/><rect x="3.8" y="6.1" width="4.8" height="0.6" fill="#cfcfcf"/></svg>
<svg style="left:795.20px;top:251.60px" width="9" height="9" viewBox="0 0 9 9"><path d="M1.5 1v7.6" stroke="#f08a3c" stroke-width="0.9"/><path d="M0.2 2.2h2.6L1.5 0.2z" fill="#f08a3c"/><rect x="3.8" y="1" width="5" height="2.6" fill="#7d7d7d"/><rect x="3.8" y="2" width="5" height="0.6" fill="#cfcfcf"/></svg>
<svg style="left:795.40px;top:289.60px" width="9.5" height="8.5" viewBox="0 0 9.5 8.5"><rect x="2.3" y="0.4" width="4.9" height="2.6" fill="#fff" stroke="#2c4d7c" stroke-width="0.8"/><rect x="0.3" y="2.6" width="8.9" height="4" rx="1.2" fill="#2c4d7c"/><rect x="2.3" y="5.2" width="4.9" height="2.9" fill="#fff" stroke="#2c4d7c" stroke-width="0.8"/></svg>
<svg style="left:796.00px;top:307.00px" width="8.4" height="9.4" viewBox="0 0 8.4 9.4"><g stroke="#3f7fc0" stroke-width="0.7" fill="none"><path d="M4.2 0.4v8.6M0.3 4.7h7.8" stroke-dasharray="1 0.7"/></g><g fill="#3f7fc0"><path d="M4.2 0l1.2 1.5h-2.4zM4.2 9.4l1.2-1.5h-2.4zM0 4.7l1.5-1.2v2.4zM8.4 4.7l-1.5-1.2v2.4z"/></g></svg>
<svg style="left:795.60px;top:325.50px" width="9" height="8.7" viewBox="0 0 9 8.7"><rect x="0.3" y="0.3" width="8.4" height="8.1" rx="0.8" fill="#4d7cc0" stroke="#3a64a2" stroke-width="0.6"/><rect x="1.9" y="0.6" width="5.2" height="3.2" fill="#dfe9f6"/><rect x="2.2" y="5.4" width="4.6" height="3" fill="#b9cce8"/><rect x="3" y="6" width="1.3" height="1.8" fill="#4d7cc0"/></svg>
<svg style="left:795.60px;top:344.40px" width="8.7" height="6.2" viewBox="0 0 8.7 6.2"><rect x="0.3" y="0.3" width="8.1" height="5.6" rx="0.8" fill="#f6c56a" stroke="#e0952a" stroke-width="0.7"/><path d="M0.8 0.9l3.55 2.7 3.55-2.7M0.8 5.4l2.6-2.2M7.9 5.4l-2.6-2.2" fill="none" stroke="#fff3d6" stroke-width="0.7"/></svg>
<span style="left:796.00px;top:358px;font-size:12px;color:#2e2e2e;font-family:'Liberation Serif',serif;">Σ</span>
<svg style="left:796.00px;top:383.70px" width="8" height="8.8" viewBox="0 0 8 8.8"><path d="M0.5 0.5h4.6l2.2 2.2v5.6h-6.8z" fill="#fff" stroke="#9aa4b0" stroke-width="0.7"/><rect x="2" y="3.6" width="1.4" height="2.6" fill="#d33"/><path d="M3.6 6.2l1.2-2 1.2 2z" fill="#3a3"/></svg>
<svg style="left:795.50px;top:403.80px" width="8.8" height="8.4" viewBox="0 0 8.8 8.4"><rect x="0.4" y="0.4" width="8" height="7.6" rx="0.6" fill="#fff" stroke="#9aa4b0" stroke-width="0.7"/><rect x="0.4" y="0.4" width="8" height="1.8" fill="#4d8ad0"/><circle cx="4.4" cy="5" r="1.4" fill="#2faa2f"/></svg>
<svg style="left:795.50px;top:421.70px" width="8.8" height="8.4" viewBox="0 0 8.8 8.4"><rect x="0.4" y="0.4" width="8" height="7.6" rx="0.6" fill="#e4e8ee" stroke="#9aa4b0" stroke-width="0.7"/><rect x="0.4" y="0.4" width="8" height="1.8" fill="#4d8ad0"/><path d="M1.4 4h6M1.4 6h6M3.2 3v4.4M5.6 3v4.4" stroke="#8b97a8" stroke-width="0.6"/></svg>
<span style="left:797.65px;top:434px;font-size:9px;color:#2e2e2e;font-weight:bold;">?</span>
<div style="left:539.40px;top:173.80px;width:246.60px;height:133.00px;background:#fff;border:0.9px solid #c0c0c0;border-right:none;border-bottom:none;box-shadow:1.8px 0.2px 0.8px rgba(40,40,40,0.6),0.8px 1.9px 1.3px rgba(0,0,0,0.36);"></div>
<svg style="left:549.40px;top:178.40px" width="10" height="10" viewBox="0 0 10 10"><path d="M0.5 0.5h4.6l1.4 1.4v5.6h-6z" fill="#fff" stroke="#8a98aa" stroke-width="0.7"/><rect x="1.4" y="2.6" width="0.9" height="3" fill="#d33"/><rect x="2.6" y="3.6" width="0.9" height="2" fill="#3a3"/><rect x="3.8" y="4.2" width="5.8" height="5.4" rx="0.6" fill="#4d7cc0" stroke="#3a64a2" stroke-width="0.5"/><rect x="4.9" y="4.4" width="3.6" height="2" fill="#dfe9f6"/><rect x="5.2" y="7.4" width="3" height="2" fill="#b9cce8"/></svg>
<span style="left:566.10px;top:175px;font-size:8.2px;color:#585858;transform:scaleX(0.9206);">Сохранить...</span>
<div style="left:540.30px;top:193.00px;width:245.20px;height:0.90px;background:#e5e2da;"></div>
<span style="left:566.10px;top:195px;font-size:8.2px;color:#585858;transform:scaleX(0.9405);">Анализ причин расхождений бюджета</span>
<span style="left:566.10px;top:212px;font-size:8.2px;color:#585858;transform:scaleX(0.9386);">Анализ причин расхождений бюджета (детали)</span>
<div style="left:540.40px;top:231.00px;width:245.60px;height:16.60px;background:#f9c81e;"></div>
<div style="left:548.30px;top:233.00px;width:12.70px;height:12.70px;background:#fdeeb8;"></div>
<svg style="left:551.60px;top:236.20px" width="7" height="6.4" viewBox="0 0 7 6.4"><path d="M0.7 3.1l2 2.2L6.2 0.8" stroke="#2e2e2e" stroke-width="1.5" fill="none"/></svg>
<span style="left:566.10px;top:231px;font-size:8.2px;color:#4a4422;transform:scaleX(0.9420);">Анализ причин расхождений бюджета с описанием</span>
<div style="left:540.30px;top:250.60px;width:245.20px;height:0.90px;background:#e5e2da;"></div>
<svg style="left:549.40px;top:254.70px" width="10" height="10" viewBox="0 0 10 10"><path d="M2.4 0.5h4.6l1.6 1.6v6h-6.2z" fill="#fff" stroke="#8a98aa" stroke-width="0.7"/><path d="M0.6 2h4.4l1.6 1.6v5.9h-6z" fill="#fff" stroke="#8a98aa" stroke-width="0.7"/><rect x="1.8" y="5" width="1" height="3" fill="#d33"/><rect x="3.1" y="6" width="1" height="2" fill="#3a3"/><rect x="4.4" y="4.4" width="0.9" height="3.6" fill="#e8a33a"/></svg>
<span style="left:566.10px;top:251px;font-size:8.2px;color:#585858;transform:scaleX(0.9319);">Другие отчеты...</span>
<div style="left:540.30px;top:269.60px;width:245.20px;height:0.90px;background:#e5e2da;"></div>
<svg style="left:549.30px;top:274.80px" width="10.5" height="10" viewBox="0 0 10.5 10"><rect x="0.4" y="0.4" width="4.4" height="4.4" rx="0.6" fill="#4d8ad0" stroke="#3a64a2" stroke-width="0.5"/><rect x="1.5" y="0.8" width="2.2" height="1.4" fill="#dfe9f6"/><path d="M2.6 5.6l3.6 1.6" stroke="#2a9a3a" stroke-width="1.1"/><path d="M5.2 5.6l2 2-2.6 0.6z" fill="#2a9a3a"/><path d="M6 5h2.6l1.4 1.4v3.2h-4z" fill="#fff" stroke="#6f7f92" stroke-width="0.7"/></svg>
<span style="left:566.10px;top:271px;font-size:8.2px;color:#585858;transform:scaleX(0.9137);">Обновить из файла...</span>
<svg style="left:549.30px;top:292.40px" width="10" height="10" viewBox="0 0 10 10"><path d="M0.5 2.8h5.6v6.6h-5.6z" fill="#fff" stroke="#9aa4b0" stroke-width="0.7"/><rect x="3.4" y="0.4" width="6" height="5.8" rx="0.6" fill="#4d7cc0" stroke="#3a64a2" stroke-width="0.5"/><rect x="4.6" y="0.7" width="3.6" height="2" fill="#dfe9f6"/><rect x="4.9" y="4" width="3" height="2.1" fill="#b9cce8"/></svg>
<span style="left:566.10px;top:289px;font-size:8.2px;color:#585858;transform:scaleX(0.9150);">Сохранить в файл...</span>
<svg style="left:0.00px;top:0.00px" width="1003" height="459" viewBox="0 0 1003 459"><rect x="543.2" y="225" width="210.8" height="24.1" rx="27" ry="12.05" fill="none" stroke="#f51de3" stroke-width="1.3"/></svg>
<div style="left:991.00px;top:456.00px;width:12.00px;height:2.20px;background:#dcdcdc;"></div>
</div></body></html>
